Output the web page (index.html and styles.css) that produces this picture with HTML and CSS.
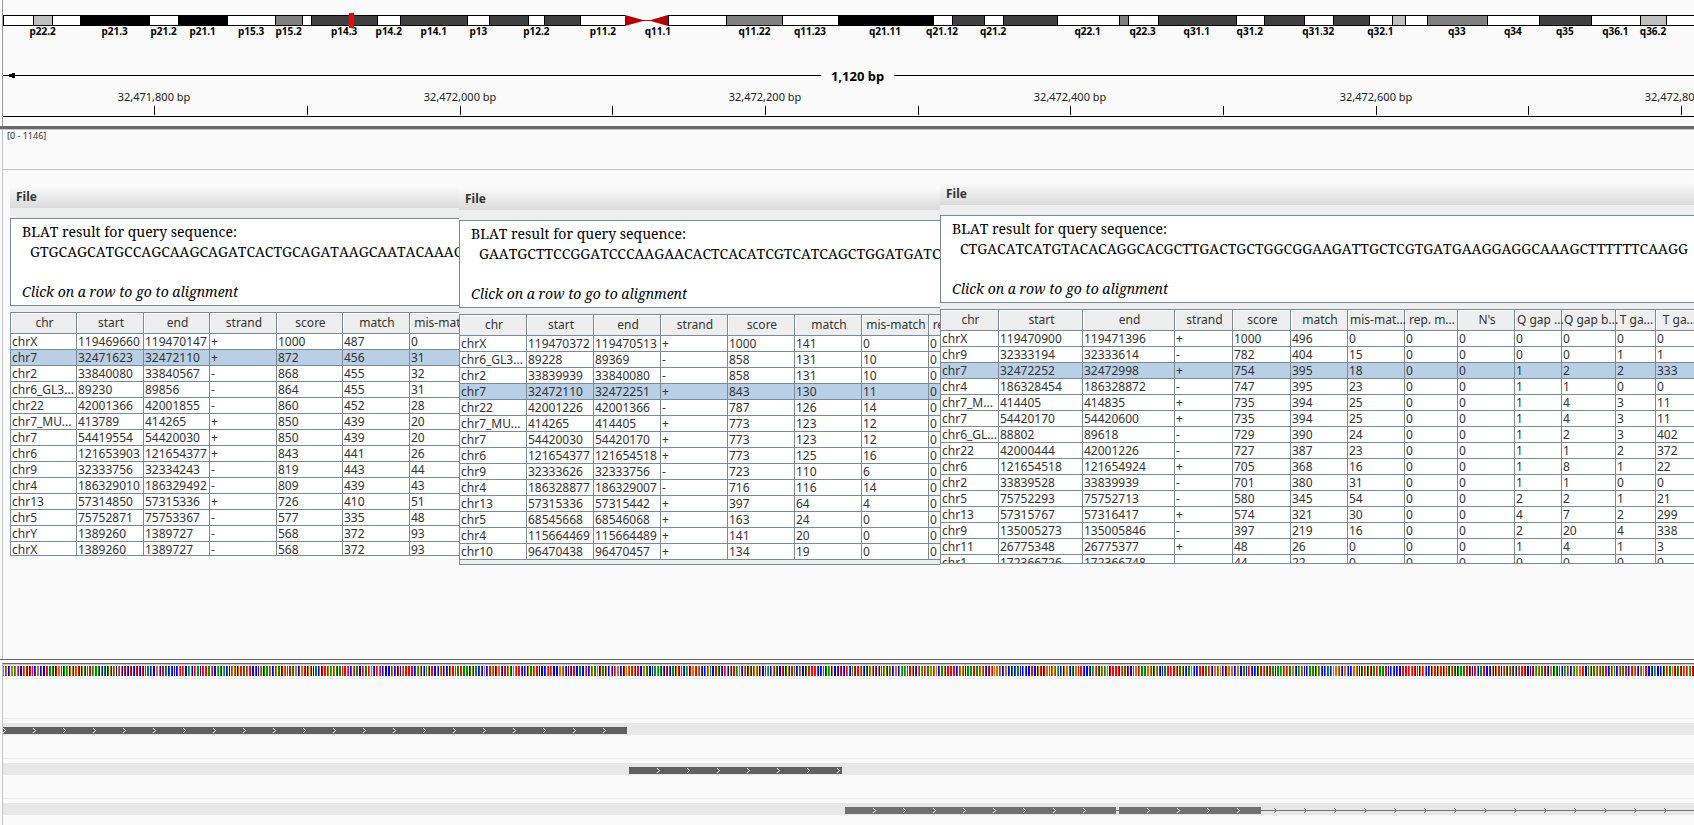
FILE: index.html
```html
<!DOCTYPE html>
<html lang="en">
<head>
<meta charset="utf-8">
<title>Genome browser - BLAT results</title>
<link rel="stylesheet" href="styles.css">
</head>
<body>
<header class="locus">
  <div class="ideogram" id="ideogram"></div>
  <div class="span">
    <svg class="span-arrow" width="10" height="5" viewBox="0 0 10 5" shape-rendering="crispEdges"><path d="M0 2h4V1h3V0h3v5H7V4H4V3H0z"/></svg>
    <span class="span-line"></span>
    <span class="span-text">1,120 bp</span>
    <span class="span-line"></span>
  </div>
  <svg class="ruler" id="ruler"></svg>
</header>
<main class="data">
  <div class="coverage">[0 - 1146]</div>
  <section class="window window-a" data-key="a"></section>
  <section class="window window-b" data-key="b"></section>
  <section class="window window-c" data-key="c"></section>
</main>
<footer class="features">
  <svg class="bases" id="bases"></svg>
  <div class="track track-tall"></div>
  <div class="track"><svg class="lane" data-lane="0"></svg></div>
  <div class="track"><svg class="lane" data-lane="1"></svg></div>
  <div class="track"><svg class="lane" data-lane="2"></svg></div>
</footer>
<script src="app.js"></script>
</body>
</html>
```
FILE: styles.css
```css
* { box-sizing: border-box; }

body {
  margin: 0;
  height: 100vh;
  display: flex;
  flex-direction: column;
  overflow: hidden;
  background: #fafafa;
  color: #333;
  font-family: "Noto Sans", "Open Sans", sans-serif;
  font-size: 12px;
}

/* Locus header */
.locus {
  margin: 0 -18px 0 2px;
  padding: 15px 0 9px;
  border-left: 1px solid #999;
}
.ideogram { position: relative; display: flex; height: 23px; }
.band { flex: 1 1 0; min-width: 0; display: flex; flex-direction: column; align-items: center; }
.band-fill { flex: none; width: 100%; height: 11px; border: 1px solid #000; border-right: 0; }
.gneg { background: #fff; }
.gpos25 { background: #c0c0c0; }
.gpos50 { background: #808080; }
.gpos75 { background: #404040; }
.gpos100 { background: #000; }
.acen { border: 0; fill: #b40000; }
.band-label { font-size: 10px; font-weight: bold; line-height: 10px; color: #000; white-space: nowrap; }
.marker { position: absolute; top: -2px; left: 20.25%; width: 5px; height: 15px; background: #f00; }

.span { display: flex; align-items: center; height: 20px; margin-top: 27px; }
.span-arrow { margin-left: 2px; margin-right: -12px; }
.span-line { flex: 1; height: 1px; background: #000; }
.span-text { padding: 2px 10px 0; font-size: 13px; font-weight: bold; color: #000; }
.ruler { display: block; width: 100%; height: 32px; font-size: 11px; }
.ruler text { text-anchor: middle; fill: #222; }

/* Data panel */
.data {
  position: relative;
  flex: 1;
  padding-left: 2px;
  border-top: 4px solid #696969;
  border-bottom: 1px solid #666;
}
.data::before { content: ""; position: absolute; inset: 0 auto 0 2px; width: 1px; background: #c4c4c4; }
.data::after { content: ""; position: absolute; inset: -1px 0 auto 0; height: 1px; background: #c4c4c4; }
.coverage {
  height: 40px;
  padding-left: 5px;
  border-bottom: 1px solid #c0c0c0;
  font-size: 9px;
  line-height: 12px;
}

/* BLAT result windows */
.window { position: absolute; overflow: hidden; background: #eee; }
.window-a { left: 10px; top: 55px; width: 449px; }
.window-b { left: 459px; top: 57px; width: 481px; }
.window-c { left: 940px; top: 52px; right: 0; }
.menubar { display: flex; height: 23px; background: linear-gradient(#fcfcfc, #dadada); }
.menu {
  padding: 0 6px;
  border: 0;
  background: none;
  font: bold 12px/23px "Noto Sans", "Open Sans", sans-serif;
  color: #333;
}
.query {
  height: 88px;
  margin: 10px 0 6px;
  padding: 3px 11px;
  border: 1px solid #7a8a99;
  border-right: 0;
  background: #fff;
  font-family: "Noto Serif", "Droid Serif", "Liberation Serif", serif;
  font-size: 14px;
  font-kerning: none;
  line-height: 20px;
  color: #000;
  white-space: nowrap;
}
.query p { margin: 0; }
.sequence { padding-left: 8px; }
.query .hint { margin-top: 20px; font-style: italic; }
.results { overflow: hidden; border: 1px solid #7a8a99; border-right: 0; }
.window-a .results { height: 244px; }
.window-b .results { height: 251px; }
.window-c .results { height: 255px; }

table { table-layout: fixed; border-collapse: separate; border-spacing: 0; }
th, td {
  height: 16px;
  padding: 0 0 0 1px;
  border-right: 1px solid #7a8a99;
  border-bottom: 1px solid #7a8a99;
  background: #fff;
  line-height: 15px;
  text-align: left;
  white-space: nowrap;
  overflow: hidden;
}
th {
  height: 21px;
  padding-left: 2px;
  overflow: visible;
  background: #eee;
  box-shadow: inset 1px 1px #fff;
  font-weight: normal;
  line-height: 20px;
  text-align: center;
}
.selected td { background: #b8cfe5; }

/* Feature tracks */
.features {
  position: relative;
  margin-left: 2px;
  border-left: 1px solid #c4c4c4;
  margin-top: 3px;
  border-top: 1px solid #666;
  overflow: hidden;
}
.bases { display: block; width: 100%; height: 14px; padding: 1px 0; border-top: 1px solid #c8c8d4; }
.track { height: 40px; padding-top: 4px; border-top: 1px solid #eee; }
.track:last-child { height: 27px; }
.lane { display: block; width: 100%; height: 12px; background: #e7e7e7; }
```
FILE: app.js
```js
const SVG = "http://www.w3.org/2000/svg";
const PX_PER_BASE = 1.527;
const START = 32471701;

function el(tag, cls, text) {
  const n = document.createElement(tag);
  if (cls) n.className = cls;
  if (text !== undefined) n.textContent = text;
  return n;
}
function shape(parent, tag, attrs, text) {
  const n = document.createElementNS(SVG, tag);
  for (const k in attrs) n.setAttribute(k, attrs[k]);
  if (text !== undefined) n.textContent = text;
  parent.appendChild(n);
  return n;
}

/* Chromosome bands: width, stain, label */
const bands = [
  [30, "gneg"], [19, "gpos25", "p22.2"], [28, "gneg"], [69, "gpos100", "p21.3"], [29, "gneg", "p21.2"],
  [49, "gpos100", "p21.1"], [48, "gneg", "p15.3"], [27, "gpos50", "p15.2"], [9, "gneg"],
  [66, "gpos75", "p14.3"], [23, "gneg", "p14.2"], [67, "gpos75", "p14.1"], [22, "gneg", "p13"],
  [39, "gpos75"], [16, "gneg", "p12.2"], [36, "gpos75"], [45, "gneg", "p11.2"], [22, "acen p"],
  [21, "acen q", "q11.1"], [58, "gneg"], [56, "gpos50", "q11.22"], [55, "gneg", "q11.23"],
  [95, "gpos100", "q21.11"], [19, "gneg", "q21.12"], [32, "gpos75"], [19, "gneg", "q21.2"],
  [54, "gpos75"], [62, "gneg", "q22.1"], [9, "gpos50"], [30, "gneg", "q22.3"], [78, "gpos75", "q31.1"],
  [28, "gneg", "q31.2"], [40, "gpos75"], [29, "gneg", "q31.32"], [36, "gpos75"], [23, "gneg", "q32.1"],
  [13, "gpos25"], [22, "gneg"], [60, "gpos50", "q33"], [52, "gneg", "q34"], [52, "gpos75", "q35"],
  [49, "gneg", "q36.1"], [26, "gpos25", "q36.2"], [46, "gneg"]
];
const ideogram = document.getElementById("ideogram");
for (const [width, stain, label] of bands) {
  const band = el("div", "band");
  band.style.flexGrow = width;
  if (stain.startsWith("acen")) {
    const s = shape(band, "svg", { class: "band-fill acen", viewBox: "0 0 22 11", preserveAspectRatio: "none" });
    shape(s, "path", { d: stain.endsWith("p") ? "M0 0L18 5H22V6H18L0 11z" : "M22 0L4 5H0V6H4L22 11z" });
  } else {
    band.append(el("div", "band-fill " + stain));
  }
  if (label) band.append(el("span", "band-label", label));
  ideogram.append(band);
}
ideogram.append(el("div", "marker"));

/* Ruler */
const ruler = document.getElementById("ruler");
for (let bp = 32471800; bp <= 32472800; bp += 100) {
  const x = Math.round((bp - START) * PX_PER_BASE);
  shape(ruler, "rect", { x, y: 21, width: 1, height: 9 });
  if (bp % 200 === 0) shape(ruler, "text", { x, y: 16 }, bp.toLocaleString("en-US") + " bp");
}
shape(ruler, "rect", { x: 0, y: 31, width: "100%", height: 1 });

/* BLAT windows */
const names = ["chr", "start", "end", "strand", "score", "match", "mis-match", "rep. match"];
const results = {
  a: {
    sequence: "GTGCAGCATGCCAGCAAGCAGATCACTGCAGATAAGCAATACAAAG",
    widths: [66, 67, 66, 67, 66, 67, 67], selected: 1, names: names.slice(0, 7),
    rows: `chrX 119469660 119470147 + 1000 487 0
chr7 32471623 32472110 + 872 456 31
chr2 33840080 33840567 - 868 455 32
chr6_GL3... 89230 89856 - 864 455 31
chr22 42001366 42001855 - 860 452 28
chr7_MU... 413789 414265 + 850 439 20
chr7 54419554 54420030 + 850 439 20
chr6 121653903 121654377 + 843 441 26
chr9 32333756 32334243 - 819 443 44
chr4 186329010 186329492 - 809 439 43
chr13 57314850 57315336 + 726 410 51
chr5 75752871 75753367 - 577 335 48
chrY 1389260 1389727 - 568 372 93
chrX 1389260 1389727 - 568 372 93`
  },
  b: {
    sequence: "GAATGCTTCCGGATCCCAAGAACACTCACATCGTCATCAGCTGGATGATC",
    widths: [67, 67, 67, 67, 67, 67, 67, 67], selected: 3, names,
    rows: `chrX 119470372 119470513 + 1000 141 0 0
chr6_GL3... 89228 89369 - 858 131 10 0
chr2 33839939 33840080 - 858 131 10 0
chr7 32472110 32472251 + 843 130 11 0
chr22 42001226 42001366 - 787 126 14 0
chr7_MU... 414265 414405 + 773 123 12 0
chr7 54420030 54420170 + 773 123 12 0
chr6 121654377 121654518 + 773 125 16 0
chr9 32333626 32333756 - 723 110 6 0
chr4 186328877 186329007 - 716 116 14 0
chr13 57315336 57315442 + 397 64 4 0
chr5 68545668 68546068 + 163 24 0 0
chr4 115664469 115664489 + 141 20 0 0
chr10 96470438 96470457 + 134 19 0 0`
  },
  c: {
    sequence: "CTGACATCATGTACACAGGCACGCTTGACTGCTGGCGGAAGATTGCTCGTGATGAAGGAGGCAAAGCTTTTTTCAAGG",
    widths: [58, 84, 92, 58, 58, 57, 57, 53, 57, 47, 54, 40, 46], selected: 2,
    names: ["chr", "start", "end", "strand", "score", "match", "mis-mat...", "rep. m...", "N's", "Q gap ...", "Q gap b...", "T ga...", "T ga..."],
    rows: `chrX 119470900 119471396 + 1000 496 0 0 0 0 0 0 0
chr9 32333194 32333614 - 782 404 15 0 0 0 0 1 1
chr7 32472252 32472998 + 754 395 18 0 0 1 2 2 333
chr4 186328454 186328872 - 747 395 23 0 0 1 1 0 0
chr7_M... 414405 414835 + 735 394 25 0 0 1 4 3 11
chr7 54420170 54420600 + 735 394 25 0 0 1 4 3 11
chr6_GL... 88802 89618 - 729 390 24 0 0 1 2 3 402
chr22 42000444 42001226 - 727 387 23 0 0 1 1 2 372
chr6 121654518 121654924 + 705 368 16 0 0 1 8 1 22
chr2 33839528 33839939 - 701 380 31 0 0 1 1 0 0
chr5 75752293 75752713 - 580 345 54 0 0 2 2 1 21
chr13 57315767 57316417 + 574 321 30 0 0 4 7 2 299
chr9 135005273 135005846 - 397 219 16 0 0 2 20 4 338
chr11 26775348 26775377 + 48 26 0 0 0 1 4 1 3
chr1 172366726 172366748 - 44 22 0 0 0 0 0 0 0`
  }
};
for (const win of document.querySelectorAll(".window")) {
  const r = results[win.dataset.key];
  const bar = el("div", "menubar");
  const menu = el("button", "menu", "File");
  menu.type = "button";
  bar.append(menu);

  const query = el("div", "query");
  query.append(
    el("p", "", "BLAT result for query sequence:"),
    el("p", "sequence", r.sequence),
    el("p", "hint", "Click on a row to go to alignment")
  );

  const table = el("table");
  table.style.width = r.widths.reduce((a, b) => a + b) + "px";
  const cols = el("colgroup");
  for (const w of r.widths) {
    const c = el("col");
    c.style.width = w + "px";
    cols.append(c);
  }
  const head = el("thead");
  const headRow = el("tr");
  for (const n of r.names) headRow.append(el("th", "", n));
  head.append(headRow);
  const body = el("tbody");
  r.rows.split("\n").forEach((line, i) => {
    const tr = el("tr", i === r.selected ? "selected" : "");
    for (const v of line.split(" ")) tr.append(el("td", "", v));
    body.append(tr);
  });
  table.append(cols, head, body);
  const box = el("div", "results");
  box.append(table);
  win.append(bar, query, box);
}

/* Reference bases */
let seed = 71;
const bases = Array.from({ length: 1400 }, () => {
  seed = (seed * 1103515245 + 12345) % 2147483648;
  return "ACGT"[Math.floor(seed / 65536) % 4];
});
[
  [0, "GAGCAGGAGGTCCTGTCCTTCTGGCACCTATAACCTGGTCAA"],
  [409, results.b.sequence],
  [551, results.c.sequence]
].forEach(([at, s]) => bases.splice(at, s.length, ...s));
const colors = { A: "#009600", C: "#0000ff", G: "#d17105", T: "#ff0000" };
const paths = { A: "", C: "", G: "", T: "" };
bases.forEach((b, i) => {
  const x = Math.round(i * PX_PER_BASE);
  const next = Math.round((i + 1) * PX_PER_BASE);
  const w = bases[i + 1] === b && next - x === 1 ? 1 : Math.min(next - x, 1);
  paths[b] += `M${x} 0h${w}v10h-${w}z`;
});
for (const b in paths) {
  shape(document.getElementById("bases"), "path", { d: paths[b], fill: colors[b] });
}

/* Alignment lanes: start, end, arrow start, height, fill, arrow colour */
const lanes = [
  [[0, 624, 0, 7, "#606060", "#fff"]],
  [[626, 839, 654, 7, "#606060", "#fff"]],
  [[842, 1113, 870, 7, "#707070", "#fff"], [1113, 1116, 9999, 1, "#707070", "#fff"],
   [1116, 1258, 1144, 7, "#707070", "#fff"], [1258, 2400, 1271, 1, "#707070", "#707070"]]
];
for (const lane of document.querySelectorAll(".lane")) {
  for (const [from, to, first, h, fill, arrow] of lanes[lane.dataset.lane]) {
    shape(lane, "rect", { x: from, y: h === 1 ? 7 : 4, width: to - from, height: h, fill });
    let d = "";
    for (let x = first; x + 3 < to; x += 30) {
      d += `M${x} 5h1v1h-1zM${x + 1} 6h1v1h-1zM${x + 2} 7h1v1h-1zM${x + 1} 8h1v1h-1zM${x} 9h1v1h-1z`;
    }
    shape(lane, "path", { d, fill: arrow });
  }
}
```
